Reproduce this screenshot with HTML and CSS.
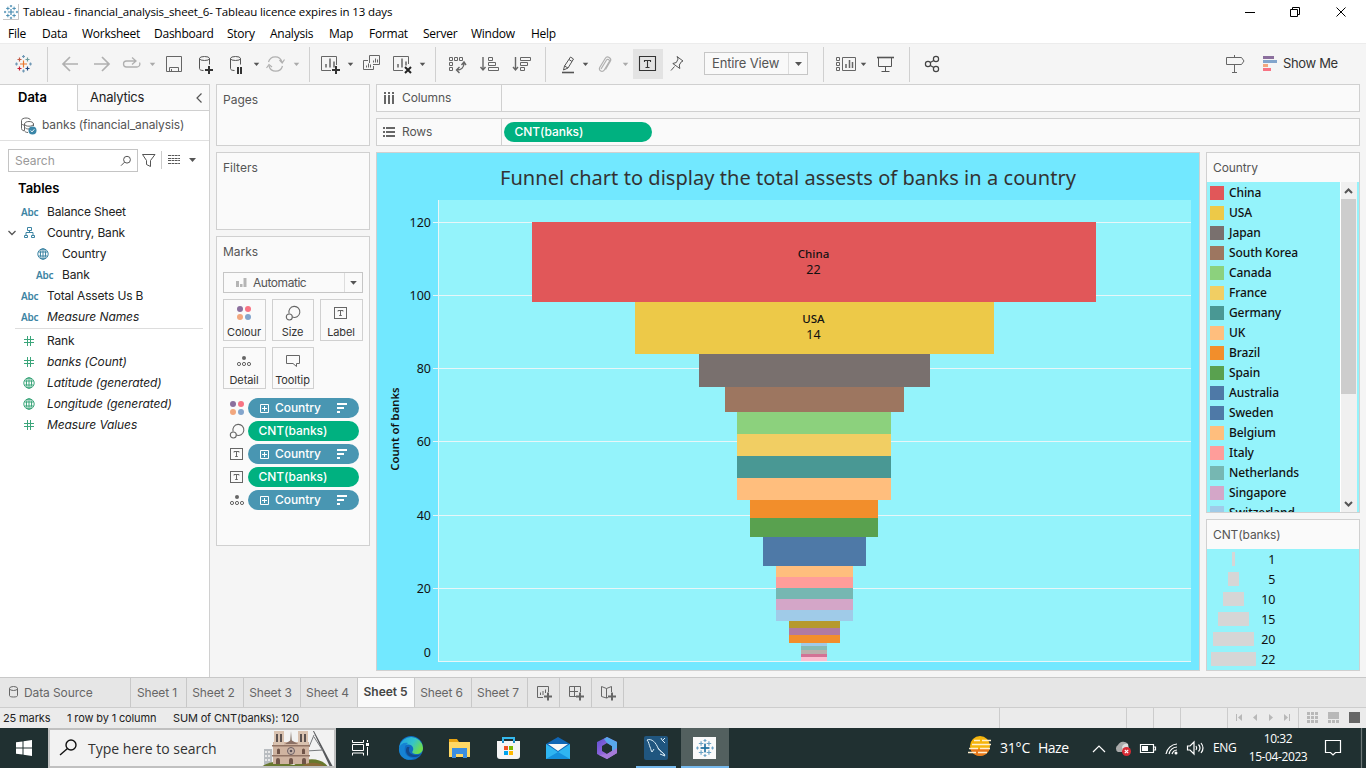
FILE: index.html
```html
<!DOCTYPE html>
<html lang="en">
<head>
<meta charset="utf-8">
<title>Tableau - financial_analysis_sheet_6</title>
<link rel="stylesheet" href="styles.css">
</head>
<body>
<svg class="defs" width="0" height="0">
  <defs>
    <symbol id="dd" viewBox="0 0 6 4"><path d="M0 0h6L3 3.6z"/></symbol>
    <symbol id="hash" viewBox="0 0 12 12"><path d="M4.500 1v10M7.500 1v10M1 4.500h10M1 7.500h10" fill="none" stroke="currentColor"/></symbol>
    <symbol id="globe" viewBox="0 0 12 12"><g fill="none" stroke="currentColor"><circle cx="6" cy="6" r="5.200"/><ellipse cx="6" cy="6" rx="2.600" ry="5.200"/><path d="M1.500 4h9M1.500 8h9M6 1v10"/></g></symbol>
    <symbol id="colour" viewBox="0 0 16 16"><circle cx="4" cy="4" r="3" fill="#8b6f9d"/><circle cx="12" cy="4" r="3" fill="#f87383"/><circle cx="4" cy="12" r="3" fill="#f2a77e"/><circle cx="12" cy="12" r="3" fill="#83a5cc"/></symbol>
    <symbol id="size" viewBox="0 0 16 16"><g fill="none" stroke="#666" stroke-width="1.1"><path d="M4.100 8.500A5.500 5.500 0 1 1 7.300 12"/><circle cx="4.300" cy="12" r="3"/></g></symbol>
    <symbol id="label" viewBox="0 0 16 16"><rect x="1.5" y="2.5" width="12" height="11" fill="none" stroke="#666"/><path d="M5 6.5V5.500h5v1M7.500 5.500v5M6.200 10.500h2.600" fill="none" stroke="#666"/></symbol>
    <symbol id="detail" viewBox="0 0 16 16"><circle cx="8" cy="5" r="2" fill="#666"/><g fill="none" stroke="#666"><circle cx="3" cy="11" r="1.600"/><circle cx="8" cy="11" r="1.600"/><circle cx="13" cy="11" r="1.600"/></g></symbol>
    <symbol id="plusbox" viewBox="0 0 9 9"><path d="M.5.5h8v8h-8zM2 4.500h5M4.500 2v5" fill="none" stroke="#fff"/></symbol>
    <symbol id="sort" viewBox="0 0 11 10"><path d="M0 0h10v2H0zM0 4h7v2H0zM0 8h3v2H0z" fill="#fff"/></symbol>
    <symbol id="tableau" viewBox="0 0 16 16"><path d="M8 4.500v7M4.500 8h7" stroke-width="1.300"/><path d="M4.500 2v4M2.500 4h4M11.500 2v4M9.500 4h4M4.500 10v4M2.500 12h4M11.500 10v4M9.500 12h4M8 0v2.600M6.700 1.300h2.600M8 13.400V16M6.700 14.700h2.600M1.300 6.700v2.600M0 8h2.600M14.700 6.700v2.600M13.400 8H16"/></symbol>
  </defs>
</svg>

<header class="titlebar">
  <svg width="16" height="16" viewBox="-1 -1 18 18" fill="none" stroke="#3f86ad"><path d="M-1 16.500h17.500V-1" stroke="#bbb"/><use href="#tableau" width="16" height="16"/></svg>
  <span class="window-title">Tableau - financial_analysis_sheet_6- Tableau licence expires in 13 days</span>
  <svg class="win-buttons" width="120" height="20" viewBox="1240 0 120 20" fill="none" stroke="#000"><path d="M1245 10.500h10M1290.500 7.500h7v7h-7zM1292.500 7.500v-2h7v7h-2M1336.500 5.500l9 9M1345.500 5.500l-9 9"/></svg>
</header>
<nav class="menu"><span>File</span><span>Data</span><span>Worksheet</span><span>Dashboard</span><span>Story</span><span>Analysis</span><span>Map</span><span>Format</span><span>Server</span><span>Window</span><span>Help</span></nav>

<div class="toolbar">
  <svg width="47" height="41" viewBox="0 43 47 41" fill="none"><g stroke-width="1.200"><path d="M23.500 60.500v7M20 64h7" stroke="#e8762c"/><path d="M19.500 57.500v4M17.500 59.500h4" stroke="#c25b45"/><path d="M27.500 57.500v4M25.500 59.500h4" stroke="#6a9c9c"/><path d="M19.500 66.500v4M17.500 68.500h4" stroke="#c72035"/><path d="M27.500 66.500v4M25.500 68.500h4" stroke="#1f457e"/><path d="M23.500 55v3M22 56.500h3M23.500 69.500v3M22 71h3M16.500 62.500v3M15 64h3M30.500 62.500v3M29 64h3" stroke="#7199b6"/></g></svg>
  <i class="sep"></i>
  <svg width="37" height="41" viewBox="48 43 37 41" fill="none" stroke="#b0b0b0" stroke-width="1.700"><path d="M78 64H63M70 57l-7 7 7 7"/></svg>
  <svg width="31" height="41" viewBox="85 43 31 41" fill="none" stroke="#b0b0b0" stroke-width="1.700"><path d="M94 64h15M102 57l7 7-7 7"/></svg>
  <svg width="44" height="41" viewBox="116 43 44 41" fill="none" stroke="#b0b0b0" stroke-width="1.300"><path d="M136 61h-9.500a3 3 0 0 0 0 6H137a3 3 0 0 0 2.500-4.500M132 57.500l4 3.500-4 3.500"/><use href="#dd" x="149.500" y="62.500" width="6" height="4" fill="#aaa" stroke="none"/></svg>
  <svg width="29" height="41" viewBox="160 43 29 41" fill="none" stroke="#666"><path d="M166.500 56.500h15v15h-15zM169.500 71.500v-4h9v4M171.500 71v-2"/></svg>
  <svg width="32" height="41" viewBox="189 43 32 41" fill="none" stroke="#555"><ellipse cx="204.500" cy="58.500" rx="5" ry="2"/><path d="M199.500 58.500v10c0 1.300 1.500 2 4 2M209.500 58.500v6"/><path d="M209 66v8M205 70h8" stroke="#333" stroke-width="2"/></svg>
  <svg width="42" height="41" viewBox="221 43 42 41" fill="none" stroke="#555"><ellipse cx="235.500" cy="58.500" rx="5" ry="2"/><path d="M230.500 58.500v10c0 1.300 1.500 2 4 2M240.500 58.500v6"/><path d="M238 67v7M241 67v7" stroke="#333" stroke-width="2"/><use href="#dd" x="253.500" y="62.500" width="6" height="4" fill="#555" stroke="none"/></svg>
  <svg width="46" height="41" viewBox="263 43 46 41" fill="none" stroke="#b0b0b0" stroke-width="1.200"><path d="M268.500 62a7 7 0 0 1 13.500 0M282.500 66a7 7 0 0 1-13.500 0M279.500 60l2.700 3 2.300-3.500M266.500 68l2.500-3.500 3 2.500"/><use href="#dd" x="293.500" y="62.500" width="6" height="4" fill="#aaa" stroke="none"/></svg>
  <i class="sep"></i>
  <svg width="48" height="41" viewBox="310 43 48 41" fill="none" stroke="#666"><path d="M331 70.500h-9.500v-14h15V65"/><path d="M326 67.500V64M330 67.500v-9M334 67.500v-6" stroke-width="1.500"/><path d="M336 66v8M332 70h8" stroke="#333" stroke-width="2"/><use href="#dd" x="347.500" y="62.500" width="6" height="4" fill="#555" stroke="none"/></svg>
  <svg width="29" height="41" viewBox="358 43 29 41" fill="none" stroke="#666"><path d="M369.500 63v-7.500h10v9H373M368 60.500h-4.500v9h10V66M373.500 62.500v-2M375.500 62.500v-4M377.500 62.500v-3M366.500 67.500v-2M368.500 67.500v-4M370.500 67.500v-3"/></svg>
  <svg width="48" height="41" viewBox="387 43 48 41" fill="none" stroke="#666"><path d="M403 70.500h-9.500v-14h15V64"/><path d="M398 67.500V64M402 67.500v-9M406 65.500v-4" stroke-width="1.500"/><path d="M405 67l6 6M411 67l-6 6" stroke="#222" stroke-width="2"/><use href="#dd" x="419.500" y="62.500" width="6" height="4" fill="#555" stroke="none"/></svg>
  <i class="sep"></i>
  <svg width="37" height="41" viewBox="436 43 37 41" fill="none" stroke="#666"><path d="M449.500 57.500h3v3h-3zM454.500 57.500h3v3h-3zM459.500 57.500h3v3h-3zM449.500 62.500h3v3h-3zM449.500 67.500h3v3h-3z"/><path d="M457 70c4 0 7-2.500 7-7M459.500 67l-3 3 3 3M461.500 65l2.500-3 2 3" stroke-width="1.400"/></svg>
  <svg width="32" height="41" viewBox="473 43 32 41" fill="none" stroke="#666"><path d="M483 57v12M480.500 67l2.500 3 2.500-3" stroke-width="1.400"/><path d="M488.500 57.500h4v3h-4zM488.500 62.500h7v3h-7zM488.500 67.500h10v3h-10z"/></svg>
  <svg width="40" height="41" viewBox="505 43 40 41" fill="none" stroke="#666"><path d="M515.500 57v12M513 67l2.500 3 2.500-3" stroke-width="1.400"/><path d="M520.500 57.500h10v3h-10zM520.500 62.500h7v3h-7zM520.500 67.500h4v3h-4z"/></svg>
  <i class="sep"></i>
  <svg width="47" height="41" viewBox="546 43 47 41" fill="none" stroke="#555"><path d="M564.500 66l6-9 3 2-5.500 9zM564.500 66l-1 4 4.500-2M569 59.500l3 2"/><path d="M562 72.500h12" stroke-width="1.600"/><use href="#dd" x="582.500" y="62.500" width="6" height="4" fill="#555" stroke="none"/></svg>
  <svg width="40" height="41" viewBox="593 43 40 41" fill="none" stroke="#b0b0b0" stroke-width="1.200"><path d="M601 69l5.500-9a1.600 1.600 0 0 1 2.800 1.500l-5 8.500a2.600 2.600 0 0 1-4.600-2.500l5.500-9a2.800 2.800 0 0 1 5 3l-4.700 8"/><use href="#dd" x="622.500" y="62.500" width="6" height="4" fill="#aaa" stroke="none"/></svg>
  <svg width="30" height="41" viewBox="633 43 30 41" fill="none" stroke="#333"><path d="M633 49h30v30h-30z" fill="#e3e3e3" stroke="none"/><path d="M639.500 56.500h16v14h-16zM644.500 62v-1.500h6V62M647.500 60.500v7M645.500 67.500h4" stroke-width="1.100"/></svg>
  <svg width="41" height="41" viewBox="663 43 41 41" fill="none" stroke="#555"><path d="M677 56.500l6 4.500-1.700.8-2 3.200.5 3.500-7-5 3.500-1 1.800-3.500zM674.500 66.500l-3.500 4"/></svg>
  <div class="fit"><span>Entire View</span><svg width="18" height="21" viewBox="0 0 18 21"><path d="M6 9h7l-3.500 4z" fill="#555"/></svg></div>
  <i class="sep sep-fit"></i>
  <svg width="47" height="41" viewBox="824 43 47 41" fill="none" stroke="#666"><path d="M836.500 57.500h3v3h-3zM836.500 62.500h3v3h-3zM836.500 67.500h3v3h-3zM842.500 57.500h13v13h-13z"/><path d="M846 68v-4M849.500 68v-8M852.500 68v-6" stroke-width="1.500"/><use href="#dd" x="860.500" y="62.500" width="6" height="4" fill="#555" stroke="none"/></svg>
  <svg width="38" height="41" viewBox="871 43 38 41" fill="none" stroke="#555"><path d="M877 57.500h17" stroke-width="1.600"/><path d="M878.500 58v8.500h13V58M885.500 66.500v4.500M881.500 71.500h8"/></svg>
  <i class="sep"></i>
  <svg width="40" height="41" viewBox="910 43 40 41" fill="none" stroke="#444" stroke-width="1.200"><circle cx="928" cy="64" r="2.600"/><circle cx="936" cy="59" r="2.600"/><circle cx="936" cy="69" r="2.600"/><path d="M930.300 62.600l3.500-2.200M930.300 65.400l3.500 2.200"/></svg>
  <svg class="push" width="32" height="41" viewBox="1222 43 32 41" fill="none" stroke="#666"><path d="M1226.500 57.500h15l2.500 3.500-2.500 3.500h-15zM1234.500 55v2M1234.500 65v7M1232 72.500h5"/></svg>
  <svg width="29" height="41" viewBox="1254 43 29 41"><path d="M1263 56h11v3h-11z" fill="#8b6f9d"/><path d="M1263 60h14v3h-14z" fill="#83a5cc"/><path d="M1263 64h5v3h-5z" fill="#f2a77e"/><path d="M1263 68h8v3h-8z" fill="#f87383"/></svg>
  <span class="showme">Show Me</span>
</div>

<main class="work">
  <aside class="data">
    <div class="tabs"><b>Data</b><div class="analytics"><span>Analytics</span><svg width="8" height="12" viewBox="0 0 8 12" fill="none" stroke="#555" stroke-width="1.200"><path d="M6.500 1.500L2 6l4.500 4.500"/></svg></div></div>
    <div class="source"><svg width="18" height="18" viewBox="0 0 18 18" fill="none" stroke="#666"><path d="M1.500 3.500c0-1.500 2-2.500 4.500-2.500s4 .8 4.500 2M1.500 3.500v8c0 1.200 1 2 2.500 2.300M1.500 6.500c.5 1 1.500 1.500 2.500 1.700M4.500 7c0-1.500 2-2.500 4.500-2.500s4.500 1 4.500 2.500-2 2.200-4.500 2.200S4.500 8.500 4.500 7zM4.500 7v6.500c0 1 1.500 2 3.500 2M13.500 7v2M5 10.500c.5 1 2 1.500 4 1.500"/><circle cx="12.500" cy="13.500" r="4" fill="#3a86a8" stroke="none"/><path d="M10.700 13.500l1.300 1.400 2.300-2.600" stroke="#fff"/></svg><span>banks (financial_analysis)</span></div>
    <div class="find"><div class="search"><span>Search</span><svg width="12" height="12" viewBox="0 0 12 12" fill="none" stroke="#555"><circle cx="7" cy="4.700" r="3.400"/><path d="M4.500 7.200L1 10.700"/></svg></div>
      <svg width="65" height="22" viewBox="138 149 65 22" fill="none" stroke="#555"><path d="M142.500 154.500h12.500l-4.500 6v6l-4-2v-4z"/><path d="M161.500 151v18" stroke="#ccc"/><path d="M168 155.500h12M168 158.500h12M168 160.500h12M168 163.500h12" stroke-dasharray="3 .6 2.400 .6"/><path d="M189 158h7l-3.500 4z" fill="#555" stroke="none"/></svg></div>
    <h2>Tables</h2>
    <ul class="fields">
      <li><i class="abc">Abc</i><span>Balance Sheet</span></li>
      <li class="open"><svg width="8" height="6" viewBox="0 0 8 6" fill="none" stroke="#555" stroke-width="1.300"><path d="M.5 1L4 4.500 7.500 1"/></svg><svg width="12" height="12" viewBox="0 0 12 12" fill="none" stroke="#3c84a3"><path d="M3.500 .5h4v3h-4zM.5 8.500h3v2h-3zM7.500 8.500h3v2h-3zM5.500 3.500v2M2 8.500v-3h7v3"/></svg><span>Country, Bank</span></li>
      <li class="sub"><svg class="blue" width="12" height="12"><use href="#globe"/></svg><span>Country</span></li>
      <li class="sub"><i class="abc">Abc</i><span>Bank</span></li>
      <li><i class="abc">Abc</i><span>Total Assets Us B</span></li>
      <li><i class="abc">Abc</i><em>Measure Names</em></li>
    </ul>
    <ul class="fields measures">
      <li><svg class="green" width="12" height="12"><use href="#hash"/></svg><span>Rank</span></li>
      <li><svg class="green" width="12" height="12"><use href="#hash"/></svg><em>banks (Count)</em></li>
      <li><svg class="green" width="12" height="12"><use href="#globe"/></svg><em>Latitude (generated)</em></li>
      <li><svg class="green" width="12" height="12"><use href="#globe"/></svg><em>Longitude (generated)</em></li>
      <li><svg class="green" width="12" height="12"><use href="#hash"/></svg><em>Measure Values</em></li>
    </ul>
  </aside>

  <section class="cards">
    <div class="card pages">Pages</div>
    <div class="card filters">Filters</div>
    <div class="card marks"><span>Marks</span>
      <div class="marktype"><svg width="11" height="10" viewBox="0 0 11 10" fill="#b5b5b5"><path d="M0 3h3v6H0zM4 6h2.500v3H4zM7.500 0h3v9h-3z"/></svg><span>Automatic</span><svg class="arrow" width="18" height="19" viewBox="0 0 18 19"><path d="M5.500 8h7L9 12z" fill="#555"/></svg></div>
      <div class="markgrid">
        <div><svg width="16" height="16"><use href="#colour"/></svg>Colour</div>
        <div><svg width="16" height="16"><use href="#size"/></svg>Size</div>
        <div><svg width="16" height="16"><use href="#label"/></svg>Label</div>
        <div><svg width="16" height="16"><use href="#detail"/></svg>Detail</div>
        <div><svg width="16" height="16" viewBox="0 0 16 16" fill="none" stroke="#666"><path d="M1.500 2.500h13v8h-3v3l-3.500-3H1.500z"/></svg>Tooltip</div>
      </div>
      <div class="shelf"><svg width="16" height="16"><use href="#colour"/></svg><div class="pill dim"><svg width="9" height="9"><use href="#plusbox"/></svg><span>Country</span><svg width="11" height="10"><use href="#sort"/></svg></div></div>
      <div class="shelf"><svg width="16" height="16"><use href="#size"/></svg><div class="pill mea"><span>CNT(banks)</span></div></div>
      <div class="shelf"><svg width="16" height="16"><use href="#label"/></svg><div class="pill dim"><svg width="9" height="9"><use href="#plusbox"/></svg><span>Country</span><svg width="11" height="10"><use href="#sort"/></svg></div></div>
      <div class="shelf"><svg width="16" height="16"><use href="#label"/></svg><div class="pill mea"><span>CNT(banks)</span></div></div>
      <div class="shelf"><svg width="16" height="16"><use href="#detail"/></svg><div class="pill dim"><svg width="9" height="9"><use href="#plusbox"/></svg><span>Country</span><svg width="11" height="10"><use href="#sort"/></svg></div></div>
    </div>
  </section>

  <section class="sheet">
    <div class="rail"><div class="rail-name"><svg width="12" height="12" viewBox="0 0 12 12" fill="#666"><path d="M1 0h2v2H1zM5 0h2v2H5zM9 0h2v2H9zM1 3h2v9H1zM5 3h2v9H5zM9 3h2v9H9z"/></svg><span>Columns</span></div></div>
    <div class="rail"><div class="rail-name"><svg width="12" height="10" viewBox="0 0 12 10" fill="#666"><path d="M0 0h2v2H0zM3 0h9v2H3zM0 4h2v2H0zM3 4h9v2H3zM0 8h2v2H0zM3 8h9v2H3z"/></svg><span>Rows</span></div><div class="pill mea"><span>CNT(banks)</span></div></div>
    <div class="canvas">
      <div class="viz">
        <h1>Funnel chart to display the total assests of banks in a country</h1>
        <svg width="822" height="470" viewBox="377 200 822 470" shape-rendering="crispEdges">
          <path d="M438 200h753v461H438z" fill="#94f3fb"/>
          <path d="M433 222.500h758M433 295.500h758M433 368.500h758M433 441.500h758M433 515.500h758M433 588.500h758M438 661.500h753M438.500 200v462" stroke="#e8f6f8" fill="none"/>
          <path d="M532 222h564v80H532z" fill="#e15759"/>
          <path d="M635 302h359v52H635z" fill="#edc948"/>
          <path d="M699 354h231v33H699z" fill="#79706e"/>
          <path d="M725 387h179v25H725z" fill="#9d7660"/>
          <path d="M737 412h154v22H737z" fill="#8cd17d"/>
          <path d="M737 434h154v22H737z" fill="#f1ce63"/>
          <path d="M737 456h154v22H737z" fill="#499894"/>
          <path d="M737 478h154v22H737z" fill="#ffbe7d"/>
          <path d="M750 500h128v18H750z" fill="#f28e2b"/>
          <path d="M750 518h128v19H750z" fill="#59a14f"/>
          <path d="M763 537h103v29H763z" fill="#4e79a7"/>
          <path d="M776 566h77v11h-77z" fill="#ffbe7d"/>
          <path d="M776 577h77v11h-77z" fill="#ff9d9a"/>
          <path d="M776 588h77v11h-77z" fill="#76b7b2"/>
          <path d="M776 599h77v11h-77z" fill="#d4a6c8"/>
          <path d="M776 610h77v11h-77z" fill="#a0cbe8"/>
          <path d="M789 621h51v7h-51z" fill="#b6992d"/>
          <path d="M789 628h51v7h-51z" fill="#b07aa1"/>
          <path d="M789 635h51v8h-51z" fill="#f28e2b"/>
          <path d="M801 643h26v3h-26z" fill="#a0cbe8"/>
          <path d="M801 646h26v4h-26z" fill="#86bcb6"/>
          <path d="M801 650h26v4h-26z" fill="#bab0ac"/>
          <path d="M801 654h26v3h-26z" fill="#d37295"/>
          <path d="M801 657h26v4h-26z" fill="#fabfd2"/>
          <g class="axis" text-anchor="end"><text x="431" y="227">120</text><text x="431" y="300">100</text><text x="431" y="373">80</text><text x="431" y="446">60</text><text x="431" y="520">40</text><text x="431" y="593">20</text><text x="431" y="657">0</text></g>
          <text class="axis-title" text-anchor="middle" transform="translate(399 429) rotate(-90)">Count of banks</text>
          <g class="mark-label" text-anchor="middle"><text x="813.500" y="258">China</text><text class="num" x="813.500" y="274">22</text><text x="813.500" y="323">USA</text><text class="num" x="813.500" y="339">14</text></g>
        </svg>
      </div>
      <div class="legends">
        <div class="legend country"><h3>Country</h3>
          <div class="legend-body">
            <ul>
              <li><svg width="14" height="14"><path d="M0 0h14v14H0z" fill="#e15759"/></svg>China</li>
              <li><svg width="14" height="14"><path d="M0 0h14v14H0z" fill="#edc948"/></svg>USA</li>
              <li><svg width="14" height="14"><path d="M0 0h14v14H0z" fill="#79706e"/></svg>Japan</li>
              <li><svg width="14" height="14"><path d="M0 0h14v14H0z" fill="#9d7660"/></svg>South Korea</li>
              <li><svg width="14" height="14"><path d="M0 0h14v14H0z" fill="#8cd17d"/></svg>Canada</li>
              <li><svg width="14" height="14"><path d="M0 0h14v14H0z" fill="#f1ce63"/></svg>France</li>
              <li><svg width="14" height="14"><path d="M0 0h14v14H0z" fill="#499894"/></svg>Germany</li>
              <li><svg width="14" height="14"><path d="M0 0h14v14H0z" fill="#ffbe7d"/></svg>UK</li>
              <li><svg width="14" height="14"><path d="M0 0h14v14H0z" fill="#f28e2b"/></svg>Brazil</li>
              <li><svg width="14" height="14"><path d="M0 0h14v14H0z" fill="#59a14f"/></svg>Spain</li>
              <li><svg width="14" height="14"><path d="M0 0h14v14H0z" fill="#4e79a7"/></svg>Australia</li>
              <li><svg width="14" height="14"><path d="M0 0h14v14H0z" fill="#4e79a7"/></svg>Sweden</li>
              <li><svg width="14" height="14"><path d="M0 0h14v14H0z" fill="#ffbe7d"/></svg>Belgium</li>
              <li><svg width="14" height="14"><path d="M0 0h14v14H0z" fill="#ff9d9a"/></svg>Italy</li>
              <li><svg width="14" height="14"><path d="M0 0h14v14H0z" fill="#76b7b2"/></svg>Netherlands</li>
              <li><svg width="14" height="14"><path d="M0 0h14v14H0z" fill="#d4a6c8"/></svg>Singapore</li>
              <li><svg width="14" height="14"><path d="M0 0h14v14H0z" fill="#a0cbe8"/></svg>Switzerland</li>
            </ul>
            <svg class="scroll" width="19" height="330" viewBox="1340 182 19 330"><path d="M1340 182h17v330h-17z" fill="#f0f0f0"/><path d="M1340 182h1v330h-1z" fill="#fff"/><path d="M1341 199h15v195h-15z" fill="#cdcdcd"/><path d="M1345 193l3.500-3.500 3.500 3.500M1345 502l3.500 3.500 3.500-3.500" fill="none" stroke="#555" stroke-width="2"/></svg>
          </div>
        </div>
        <div class="legend sizes"><h3>CNT(banks)</h3>
          <ul>
            <li><svg width="54" height="14"><path d="M25 0h3v14h-3z"/></svg><span>1</span></li>
            <li><svg width="54" height="14"><path d="M21 0h11v14H21z"/></svg><span>5</span></li>
            <li><svg width="54" height="14"><path d="M16 0h21v14H16z"/></svg><span>10</span></li>
            <li><svg width="54" height="14"><path d="M11 0h31v14H11z"/></svg><span>15</span></li>
            <li><svg width="54" height="14"><path d="M6 0h41v14H6z"/></svg><span>20</span></li>
            <li><svg width="54" height="14"><path d="M4 0h45v14H4z"/></svg><span>22</span></li>
          </ul>
        </div>
      </div>
    </div>
  </section>
</main>

<div class="sheettabs">
  <div class="ds"><svg width="10" height="12" viewBox="0 0 10 12" fill="none" stroke="#666"><ellipse cx="4.500" cy="2.500" rx="4" ry="2"/><path d="M.5 2.500v7c0 1 1.500 1.500 4 1.500s4-.5 4-1.500v-7"/></svg><span>Data Source</span></div>
  <div class="s1">Sheet 1</div><div>Sheet 2</div><div>Sheet 3</div><div>Sheet 4</div><div class="active">Sheet 5</div><div>Sheet 6</div><div class="s7">Sheet 7</div>
  <div class="new"><svg width="16" height="16" viewBox="0 0 16 16" fill="none" stroke="#666"><path d="M7 12.500H1.500v-11h11V7M4.500 10V7.500M7 10V6M9.500 8V4.500"/><path d="M12 7.500v8M8 11.500h8" stroke-width="2"/></svg></div>
  <div class="new"><svg width="16" height="16" viewBox="0 0 16 16" fill="none" stroke="#666"><path d="M8 11.500H1.500v-10h11V7M1.500 6.500H10M6.500 1.500v10"/><path d="M12 7.500v8M8 11.500h8" stroke-width="2"/></svg></div>
  <div class="new"><svg width="16" height="16" viewBox="0 0 16 16" fill="none" stroke="#666"><path d="M6.500 13V3.500L1.500 1.500v10l5 1.500 1.500-.5M6.500 3.500l5-2V7"/><path d="M12 7.500v8M8 11.500h8" stroke-width="2"/></svg></div>
</div>
<div class="status">
  <span class="st1">25 marks</span><span class="st2">1 row by 1 column</span><span class="st3">SUM of CNT(banks): 120</span>
  <svg width="367" height="20" viewBox="999 708 367 20"><path d="M999.500 708v20M1126.500 708v20M1153.500 708v20M1180.500 708v20M1227.500 708v20M1298.500 708v20" stroke="#ccc"/><path d="M1236 714h1v7h-1zM1242 714v7l-4-3.500zM1257 714v7l-4-3.500zM1269 714v7l4-3.500zM1284 714v7l4-3.500zM1289 714h1v7h-1zM1307 712h3v3h-3zM1311 712h3v3h-3zM1315 712h3v3h-3zM1307 716h3v3h-3zM1311 716h3v3h-3zM1315 716h3v3h-3zM1307 720h3v3h-3zM1311 720h3v3h-3zM1315 720h3v3h-3zM1328 712h11v7h-11zM1328 720h3v3h-3zM1332 720h3v3h-3zM1336 720h3v3h-3z" fill="#b8b8b8"/><path d="M1349 712h11v11h-11z" fill="#666"/></svg>
</div>

<footer class="taskbar">
  <svg width="48" height="40" viewBox="0 728 48 40" fill="#fff"><path d="M16 742.300l6.500-.9v6.100H16zM23.500 741.200l8.500-1.200v7.500h-8.500zM16 748.500h6.500v6.100l-6.500-.9zM23.500 748.500H32v7.500l-8.500-1.200z"/></svg>
  <div class="winsearch"><svg width="38" height="36" viewBox="50 730 38 36" fill="none" stroke="#111" stroke-width="1.400"><circle cx="71" cy="745" r="5"/><path d="M67.500 748.500L60 755"/></svg><span>Type here to search</span>
    <svg class="cathedral" width="74" height="36" viewBox="261 730 74 36"><path d="M265 749h8v17h-8z" fill="#b8bcc0"/><path d="M266 751h2v2h-2zM269 751h2v2h-2zM266 755h2v2h-2zM269 755h2v2h-2zM266 759h2v2h-2zM269 759h2v2h-2z" fill="#e8e8e8"/><path d="M314 731l17 36h3l-19-36z" fill="#55575a"/><path d="M315 735l-5 12M307 751l17-1M315 737l9 14" fill="none" stroke="#77797c"/><path d="M261 768c10-9 22-6 34-3 12-8 28-8 35 3z" fill="#68782e"/><path d="M274 742h36v22h-36z" fill="#cfb3a0"/><path d="M275 731h10v14h-10zM299 731h10v14h-10z" fill="#d9c2b0"/><path d="M291 742l1-11 1 11z" fill="#8e8076"/><path d="M286 744l6-4 7 4z" fill="#8b7065"/><path d="M273 745h38v1.500h-38zM273 755h38v1.500h-38z" fill="#927465"/><path d="M277 734h2v8h-2zM281 734h2v8h-2zM301 734h2v8h-2zM305 734h2v8h-2z" fill="#5c5250"/><circle cx="292" cy="751" r="3.500" fill="#c9b5aa" stroke="#6b5d61"/><circle cx="292" cy="751" r="1.300" fill="#5b5157"/><path d="M277 764v-4a2 2 0 0 1 4 0v4zM290 764v-4a2 2 0 0 1 4 0v4zM303 764v-4a2 2 0 0 1 4 0v4zM278 754v-4a1.500 1.500 0 0 1 3 0v4zM303 754v-4a1.500 1.500 0 0 1 3 0v4z" fill="#705448"/><path d="M300 768c8-7 20-7 28 0z" fill="#8a6a38"/></svg></div>
  <svg width="399" height="40" viewBox="336 728 399 40">
    <defs>
      <linearGradient id="edge1" x1="0" y1="0" x2="1" y2=".5"><stop offset="0" stop-color="#1c9ee8"/><stop offset=".6" stop-color="#35c4c8"/><stop offset="1" stop-color="#6ddc50"/></linearGradient>
      <linearGradient id="ms" x1="0" y1="0" x2="1" y2="1"><stop offset="0" stop-color="#5b4fd0"/><stop offset="1" stop-color="#c67ae8"/></linearGradient>
    </defs>
    <path d="M352.500 740v2.500h11V740M352.500 744.500h11v6h-11zM352.500 755.500V753h11v2.500M367.500 740v2M367.500 747v8.500" fill="none" stroke="#fff"/><path d="M366 743h3v3h-3z" fill="#fff"/>
    <circle cx="411" cy="748" r="12" fill="#0f6cc4"/><path d="M399.200 747a12 12 0 0 1 23.800 1c0 4-3 6-6.500 6-3 0-5-1.200-4-2.500 2-3 0-7-4-7-4.500 0-8 1-9.300 2.500z" fill="url(#edge1)"/><path d="M399 748c1-4 5-6 9-5-3 2-4 5-3 9 1 4 5 6 9 6-8 5-16-2-15-10z" fill="#1683d3"/><path d="M407 747c-3 5 1 11 8 10 3 0 5-2 6-3-4 2-11 1-12-3-.3-2 .3-3 .5-4z" fill="#124a8c"/>
    <path d="M449 739h8l2 3h11v15h-21z" fill="#e8a312"/><path d="M449 742h21v15h-21z" fill="#ffd864"/><path d="M452 748h15v10h-4v-4h-7v4h-4z" fill="#3b8ee0"/>
    <path d="M503 743v-5h11v5" fill="none" stroke="#35b9ee" stroke-width="2"/><path d="M497 741h23v15q0 3-3 3h-17q-3 0-3-3z" fill="#f5f5f5"/><path d="M503 741v2M514 741v2" stroke="#1c8cc8" stroke-width="2"/><path d="M504 746h4v4h-4z" fill="#f25022"/><path d="M509 746h4v4h-4z" fill="#7fba00"/><path d="M504 751h4v4h-4z" fill="#00a4ef"/><path d="M509 751h4v4h-4z" fill="#ffb900"/>
    <path d="M546 744l12-7 12 7v15h-24z" fill="#1066b5"/><path d="M548 744h20l-10 7z" fill="#f7f7f7"/><path d="M546 744l12 8 12-8v15h-24z" fill="#2fb5f1"/><path d="M546 759l12-7 12 7z" fill="#1590dc"/>
    <path d="M607 737l10 5v11l-10 6-10-5v-12zM607 743l-5 3v5l5 3 5-3v-5z" fill="url(#ms)" fill-rule="evenodd"/><path d="M607 737l10 5v11l-5-2v-5l-5-3-3-4z" fill="#58a8ec"/><path d="M607 754l10-6v5l-10 6-8-4z" fill="#a57bd8"/>
    <rect x="644" y="736" width="24" height="24" rx="2" fill="#20567f"/><path d="M647 740c5-2 9 3 11 8 1 3 5 4 7 7M647 740c2 2 2 5 3 7s1 4 2 5l2-3M658 748c2 3 5 4 7 8l-5-2M661 738l1 2 3 3M665 738l-2 2" fill="none" stroke="#dceef8"/>
    <path d="M681 728h48v38h-48z" fill="#53605f"/><path d="M636 766h40v2h-40zM681 766h48v2h-48z" fill="#76b9ed"/><path d="M693 737h23v22h-23z" fill="#fafafa"/><g fill="none" stroke="#6ba3c6"><use href="#tableau" x="696" y="739" width="18" height="18"/></g><path d="M705 743.500v9M700.500 748h9" stroke="#1f6f9f" stroke-width="1.300"/>
  </svg>
  <svg class="push" width="35" height="40" viewBox="965 728 35 40" fill="none"><circle cx="980" cy="746" r="10" fill="#f5b50c"/><path d="M970.500 749a10 10 0 0 0 19 0z" fill="#e8781c"/><path d="M974 740.500h6M982 740.500h9M972 744.500h19M969 748.500h9M980 748.500h10M968 752.500h8M978 752.500h9" stroke="#fff0d0" stroke-width="1.300"/></svg>
  <span class="temp">31°C</span><span class="haze">Haze</span>
  <svg width="122" height="40" viewBox="1090 728 122 40" fill="none" stroke="#fff" stroke-width="1.200"><path d="M1093 752l6-6 6 6"/><path d="M1118 752a4 4 0 0 1 0-7 6 6 0 0 1 10-1l2 8z" fill="#aaa" stroke="none"/><path d="M1122 752v-5a5 5 0 0 1 6-3v8z" fill="#ddd" stroke="none"/><circle cx="1126.500" cy="751.500" r="4.500" fill="#d92b35" stroke="none"/><path d="M1124.800 749.800l3.400 3.400M1128.200 749.800l-3.400 3.400"/><path d="M1140.500 744.500h13v8h-13zM1154 747h1.500v3h-1.500"/><path d="M1142 746h6v5h-6z" fill="#fff" stroke="none"/><path d="M1166 754a12 12 0 0 1 11-10M1169 754a9 9 0 0 1 8-7M1172 754a6 6 0 0 1 5-4" /><circle cx="1176" cy="753" r="1.500" fill="#fff" stroke="none"/><path d="M1187.500 746h2.500l4-4v12l-4-4h-2.500zM1196 746q1.500 2 0 4M1198.500 744.500q3 3.500 0 7M1201 743q4 5 0 10"/></svg>
  <span class="lang">ENG</span>
  <div class="clock"><span class="time">10:32</span><span class="date">15-04-2023</span></div>
  <svg width="52" height="40" viewBox="1314 728 52 40" fill="none" stroke="#fff" stroke-width="1.200"><path d="M1325.500 740.500h15v12h-5l-2.500 2.500-2.500-2.500h-5z"/><path d="M1361.500 728v40" stroke="#6e7878"/></svg>
</footer>
</body>
</html>
```

FILE: styles.css
```css
* { box-sizing: border-box; margin: 0; padding: 0; }
body { width: 1366px; height: 768px; overflow: hidden; display: flex; flex-direction: column; background: #f5f5f5; color: #333; font: 12px/16px Inter, "Open Sans", sans-serif; }
svg { display: block; flex: none; }
ul { list-style: none; }
span, em, b, h1, h2, h3 { white-space: nowrap; }
.defs { position: absolute; }
.push { margin-left: auto; }

.titlebar { height: 24px; background: #fff; display: flex; align-items: center; padding-left: 3px; color: #000; font: 11.5px/16px "Open Sans", sans-serif; }
.window-title { margin-left: 4px; letter-spacing: -0.13px; }
.win-buttons { margin-left: auto; margin-right: 6px; }
.menu { height: 19px; background: #fff; display: grid; grid-template-columns: 34px 40px 72px 73px 43px 59px 40px 54px 48px 60px 40px; padding-left: 8px; color: #000; font: 12px/20px "Open Sans", sans-serif; letter-spacing: -0.25px; }

.toolbar { height: 41px; display: flex; flex: none; border-top: 1px solid #ececec; }
.toolbar svg { margin-top: -1px; }
.sep { width: 1px; height: 35px; margin-top: 3px; background: #d0d0d0; flex: none; }
.fit { width: 104px; height: 23px; margin-top: 8px; border: 1px solid #c6c6c6; display: flex; background: #f9f9f9; font-size: 13px; line-height: 21px; color: #555; }
.fit span { width: 84px; padding-left: 7px; border-right: 1px solid #ddd; letter-spacing: -.15px; }
.toolbar .fit svg { margin: 0; }
.sep-fit { margin-left: 15px; }
.showme { width: 83px; font-size: 13px; line-height: 39px; letter-spacing: -.35px; color: #333; }

.work { height: 593px; flex: none; display: flex; }
.data { width: 210px; background: #fff; border-right: 1px solid #d0d0d0; border-top: 1px solid #d0d0d0; color: #222; }
.tabs { display: flex; height: 26px; font-size: 13px; line-height: 25px; }
.tabs b { width: 77px; padding-left: 18px; font-weight: 600; color: #000; }
.analytics { flex: 1; border-left: 1px solid #d0d0d0; border-bottom: 1px solid #d0d0d0; background: #fafafa; display: flex; align-items: center; justify-content: space-between; padding: 0 6px 0 12px; letter-spacing: -.25px; }
.source { height: 30px; border-bottom: 1px solid #e0e0e0; display: flex; align-items: center; gap: 4px; padding-left: 20px; color: #555; letter-spacing: -.12px; }
.source span { margin-top: -2px; }
.find { display: flex; padding: 8px 0 0 8px; }
.search { width: 130px; height: 23px; border: 1px solid #c4c4c4; display: flex; align-items: center; justify-content: space-between; padding: 0 5px 0 6px; color: #999; }
.data h2 { font-size: 13px; font-weight: 600; line-height: 20px; color: #000; margin: 6px 0 3px 18px; }
.fields li { height: 21px; display: flex; align-items: center; padding-left: 20px; gap: 11px; letter-spacing: -.16px; }
.fields li:first-child { letter-spacing: -.19px; }
.fields svg { margin: 0 1px 0 3px; }
.fields li.open { padding-left: 5px; gap: 0; }
.fields .open svg:first-child { margin: 0 5px 0 3px; }
.fields .open svg { margin-right: 0; }
.fields .open span { margin-left: 11px; }
.fields .sub { padding-left: 35px; gap: 11px; }
.sub svg { margin-left: 2px; margin-right: 2px; }
.abc { width: 17px; font: normal 600 10px/20px "Noto Sans", sans-serif; color: #3c84a3; margin-right: -1px; }
.fields .abc { letter-spacing: -.2px; padding-left: 1px; }
.fields em { letter-spacing: -.09px; }
.blue { color: #3c84a3; }
.green { color: #3ba57a; }
.measures { margin-left: 15px; width: 188px; border-top: 1px solid #ddd; padding-top: 1px; margin-top: 1px; }
.measures li { padding-left: 5px; }

.cards { width: 154px; margin-left: 6px; display: flex; flex-direction: column; gap: 6px; }
.card { border: 1px solid #d0d0d0; background: #fafafa; padding: 7px 6px; color: #555; }
.pages { height: 62px; }
.filters { height: 78px; }
.marks { height: 310px; }
.marktype { display: flex; align-items: center; width: 140px; height: 21px; border: 1px solid #c6c6c6; margin-top: 12px; padding-left: 12px; gap: 6px; letter-spacing: -.45px; }
.marktype .arrow { margin-left: auto; border-left: 1px solid #ddd; }
.markgrid { display: grid; grid-template-columns: 43px 42px 43px; gap: 6px; margin: 6px 0 9px; }
.markgrid div { height: 42px; border: 1px solid #d0d0d0; display: flex; flex-direction: column; align-items: center; gap: 3px; padding-top: 5px; padding-right: 1px; font-size: 11px; letter-spacing: -.1px; color: #333; }
.shelf { display: flex; align-items: center; gap: 4px; height: 20px; margin-bottom: 3px; padding-left: 6px; }
.shelf .pill { width: 111px; margin-left: -1px; }
.pill { height: 20px; border-radius: 10px; display: flex; align-items: center; color: #fff; padding: 0 11px 0 11px; font-weight: 500; letter-spacing: -.05px; flex: none; }
.dim { background: #4996b2; padding-left: 12px; }
.dim span { margin: 0 auto 0 6px; }
.mea { background: #00b180; }
.mea span { margin-left: -.5px; }

.sheet { width: 984px; margin-left: 6px; display: flex; flex-direction: column; gap: 6px; }
.rail { height: 28px; border: 1px solid #d0d0d0; background: #fafafa; display: flex; align-items: center; }
.rail-name { width: 125px; height: 26px; border-right: 1px solid #d0d0d0; display: flex; align-items: center; gap: 7px; padding-left: 6px; color: #555; letter-spacing: -.1px; }
.rail .pill { width: 148px; margin-left: 2px; }
.canvas { height: 519px; display: flex; gap: 6px; }
.viz { width: 824px; border: 1px solid #d0d0d0; background: #72e8ff; }
.viz h1 { height: 47px; font: 450 20px/50px "Noto Sans", sans-serif; letter-spacing: .05px; text-align: center; color: #333; }
.axis text { font: 12.500px "Noto Sans", sans-serif; fill: #111; }
.axis-title { font: 600 11.300px "Noto Sans", sans-serif; fill: #111; }
.mark-label text { font: 500 11.500px "Noto Sans", sans-serif; fill: #111; }
.mark-label .num { font-weight: 400; font-size: 12.500px; }
.legends { width: 154px; display: flex; flex-direction: column; gap: 6px; }
.legend { border: 1px solid #d0d0d0; background: #94f3fb; overflow: hidden; }
.legend h3 { height: 29px; background: #fafafa; font-size: 12px; font-weight: 400; line-height: 29px; letter-spacing: -.1px; color: #555; padding-left: 6px; }
.country { height: 361px; }
.legend-body { height: 330px; display: flex; overflow: hidden; }
.legend-body ul { width: 133px; padding-top: 1px; }
.country li { height: 20px; display: flex; align-items: center; gap: 5px; padding-left: 3px; font: 500 12px/20px "Noto Sans", sans-serif; letter-spacing: -.1px; color: #111; }
.country li svg { margin-top: -1px; }
.sizes { height: 152px; }
.sizes ul { padding-top: 1px; }
.sizes li { height: 20px; display: flex; align-items: center; font: 12.500px/20px "Noto Sans", sans-serif; color: #111; }
.sizes svg { fill: #d6d6d6; margin-top: -2px; }
.sizes span { width: 14.500px; display: flex; justify-content: flex-end; }

.sheettabs { height: 31px; flex: none; display: flex; border-top: 1px solid #c8c8c8; border-bottom: 1px solid #cdcdcd; background: #e6e6e6; line-height: 29px; color: #666; }
.sheettabs > div { width: 57px; border-right: 1px solid #c8c8c8; text-align: center; padding-right: 3px; letter-spacing: -.15px; white-space: nowrap; }
.sheettabs .ds { width: 131px; display: flex; gap: 5px; padding-left: 9px; letter-spacing: -.1px; }
.ds svg { margin-top: 8px; }
.sheettabs .s1 { width: 56px; }
.sheettabs .s7 { width: 56px; }
.sheettabs .active { background: #fafafa; font-weight: 600; line-height: 27px; letter-spacing: -.05px; padding-right: 1px; color: #444; }
.sheettabs .new { width: 32px; padding: 7px 0 0 8px; }
.status { height: 20px; flex: none; display: flex; background: #ebebeb; font-size: 11px; line-height: 20px; color: #222; padding-left: 3px; letter-spacing: -.13px; }
.status svg { margin-left: auto; }
.st1 { width: 64px; }
.st2 { width: 106px; }
.st3 { letter-spacing: -.15px; }

.taskbar { height: 40px; flex: none; display: flex; background: #203031; color: #fff; font: 14px/40px "Open Sans", sans-serif; }
.winsearch { width: 288px; height: 40px; border: 2px solid #c0c0c0; background: #f2f2f2; display: flex; line-height: 37px; letter-spacing: -.02px; color: #333; }
.cathedral { margin-left: auto; }
.temp { width: 38px; letter-spacing: -.2px; }
.haze { width: 52px; letter-spacing: -.5px; }
.lang { width: 32px; font-size: 12px; line-height: 39px; padding-left: 1px; letter-spacing: -.3px; }
.clock { width: 70px; display: flex; flex-direction: column; align-items: center; padding: 2px 2px 0 0; font-size: 12px; line-height: 18px; letter-spacing: -.4px; }
```
